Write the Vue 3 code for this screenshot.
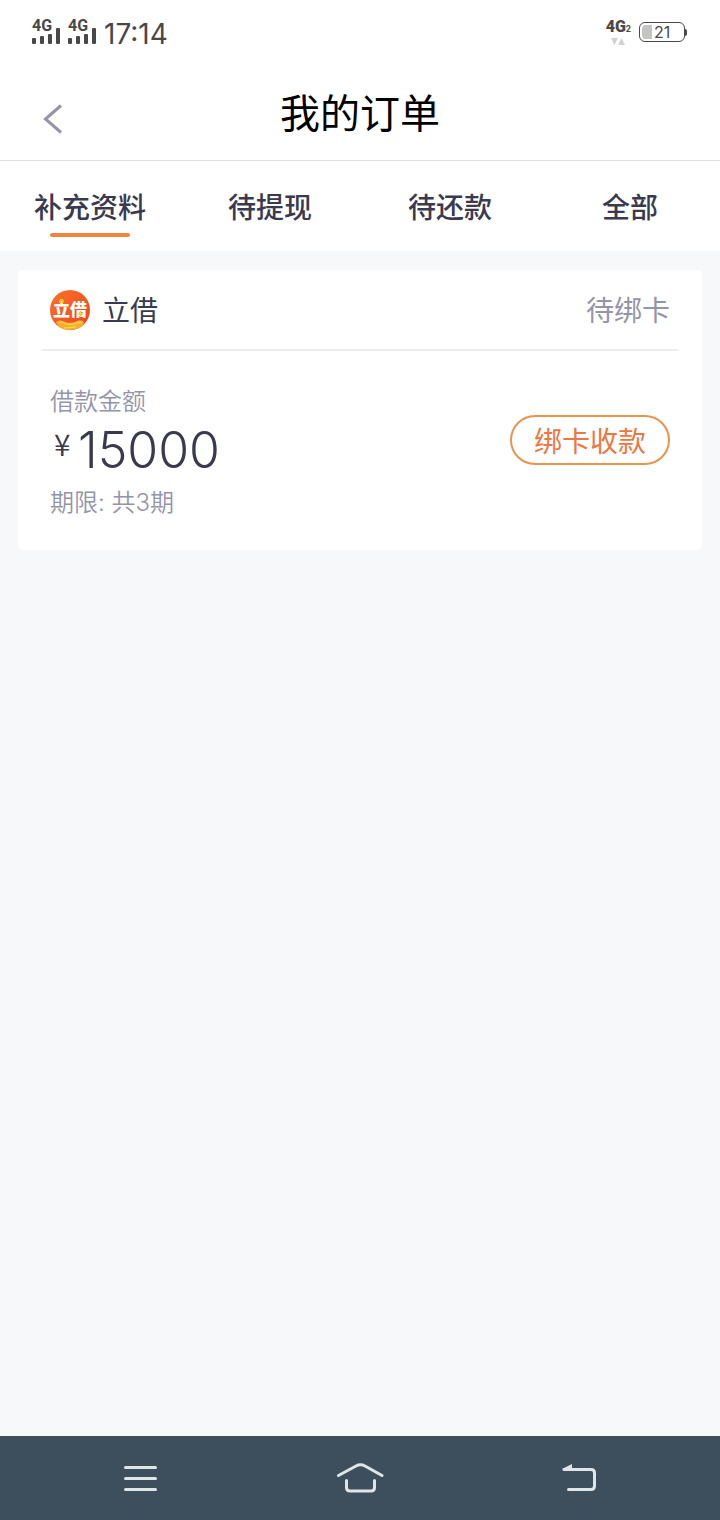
<script setup>
import { ref } from 'vue'

const tabs = ['补充资料', '待提现', '待还款', '全部']
const active = ref(0)
const signals = [1, 2]
</script>

<template>
  <div class="screen">
    <div class="status">
      <div class="status-side">
        <span v-for="s in signals" :key="s" class="signal">
          <b>4G</b>
          <svg width="28" height="16" viewBox="0 0 28 16" aria-hidden="true">
            <rect x="0" y="10" width="4" height="6" rx="1" />
            <rect x="8" y="8" width="4" height="8" rx="1" />
            <rect x="16" y="6" width="4" height="10" rx="1" />
            <rect x="24" y="0" width="4" height="16" rx="1" />
          </svg>
        </span>
        <time class="clock">17:14</time>
      </div>
      <div class="status-side">
        <span class="network">
          <span class="network-name"><b>4G</b><small>2</small></span>
          <svg width="14" height="7" viewBox="0 0 14 7" aria-hidden="true">
            <path d="M0 0h7L3.500 7zM7 7h7L10.500 0z" />
          </svg>
        </span>
        <span class="battery"><i></i><span>21</span></span>
      </div>
    </div>

    <header class="header">
      <button class="back" type="button" aria-label="返回">
        <svg width="20" height="30" viewBox="0 0 20 30">
          <path d="M18 1.500L2.500 15L18 28.500" />
        </svg>
      </button>
      <h1>我的订单</h1>
    </header>

    <nav class="tabs">
      <button
        v-for="(tab, i) in tabs"
        :key="tab"
        type="button"
        :class="{ active: active === i }"
        @click="active = i"
      >{{ tab }}</button>
    </nav>

    <main class="content">
      <article class="card">
        <div class="card-head">
          <svg class="logo" width="40" height="40" viewBox="0 0 40 40" aria-hidden="true">
            <defs>
              <linearGradient id="disc" x1="0" y1="0" x2="1" y2="1">
                <stop offset="0" stop-color="#fb7328" />
                <stop offset="1" stop-color="#ea4322" />
              </linearGradient>
              <clipPath id="round"><circle cx="20" cy="20" r="20" /></clipPath>
            </defs>
            <g clip-path="url(#round)">
              <rect width="40" height="40" fill="url(#disc)" />
              <path d="M6 32Q10 29.500 14 31.500Q20 34 26 31.500Q31 29 34 32L32 40H9z" fill="#f9ac28" />
              <path d="M9 33q3-1.500 6 .5t10 0q3-1.500 7-1M14 37.500q6 1 12-1" fill="none" stroke="#fdd04f" stroke-width="1.500" />
            </g>
            <text x="20" y="26" text-anchor="middle">立借</text>
            <circle cx="11.500" cy="11" r="1.500" fill="none" stroke="#ffc72d" stroke-width="1.500" />
            <path d="M31 21l-2 3h3l-3 3" fill="none" stroke="#ffc72d" stroke-width="1.500" />
          </svg>
          <h2>立借</h2>
          <span class="state">待绑卡</span>
        </div>
        <div class="card-body">
          <div class="loan">
            <p class="muted">借款金额</p>
            <p class="amount"><span>¥</span>15000</p>
            <p class="muted">期限: 共3期</p>
          </div>
          <button class="bind" type="button">绑卡收款</button>
        </div>
      </article>
    </main>

    <footer class="system-nav">
      <button type="button" aria-label="菜单">
        <svg width="48" height="40" viewBox="0 0 48 40">
          <path d="M9.500 9.500h30M9.500 20.500h30M9.500 31.500h30" />
        </svg>
      </button>
      <button type="button" aria-label="主页">
        <svg width="48" height="40" viewBox="0 0 48 40">
          <path d="M2.500 17.500L20 8q4.500-2.500 9 0l17 9.500M10.500 22.500v7q0 3.500 3.500 3.500h21q3.500 0 3.500-3.500v-7" />
        </svg>
      </button>
      <button type="button" aria-label="返回上一级">
        <svg width="48" height="40" viewBox="0 0 48 40">
          <path d="M8 11.500h27q3.500 0 3.500 3.500v13q0 3.500-3.500 3.500H12.500" />
          <path class="tip" d="M6 11L16 6v6z" />
        </svg>
      </button>
    </footer>
  </div>
</template>

<style>
body {
  background: #f6f8fa;
}
</style>

<style scoped>
.screen {
  min-height: 100vh;
  display: flex;
  flex-direction: column;
  background: #f6f8fa;
  color: #393a4e;
  font-family: Inter, "Noto Sans CJK SC", sans-serif;
}
button {
  border: 0;
  padding: 0;
  background: none;
  color: inherit;
  font: inherit;
  cursor: pointer;
}
h1, h2, p {
  margin: 0;
  font-weight: 400;
}
.status {
  height: 66px;
  padding: 0 32px;
  display: flex;
  justify-content: space-between;
  align-items: center;
  background: #fff;
  color: #484848;
}
.status svg {
  fill: currentColor;
}
.status-side {
  display: flex;
  align-items: center;
  gap: 8px;
}
.signal {
  height: 26px;
  padding-bottom: 4px;
  display: grid;
  align-items: end;
}
.signal > * {
  grid-area: 1 / 1;
}
.signal b {
  align-self: start;
  font: 700 16px/16px Roboto, sans-serif;
}
.clock {
  padding-top: 2px;
  font-size: 28px;
  line-height: 32px;
}
.network {
  display: flex;
  flex-direction: column;
  align-items: center;
  padding-bottom: 4px;
}
.network-name {
  display: flex;
  align-items: baseline;
  font: 700 16px/18px Roboto, sans-serif;
}
.network-name small {
  font-size: 9px;
}
.network svg {
  fill: #d2d2d2;
}
.battery {
  position: relative;
  width: 46px;
  height: 20px;
  box-sizing: border-box;
  border: 1px solid #484848;
  border-radius: 6px;
  margin: 0 3px 2px 0;
  padding: 2px;
  display: flex;
  align-items: center;
  font-size: 16px;
}
.battery i {
  width: 10px;
  height: 14px;
  margin-right: 2px;
  border-radius: 4px 0 0 4px;
  background: #c4c4c4;
}
.battery::after {
  content: "";
  position: absolute;
  right: -3px;
  top: 6px;
  width: 2px;
  height: 7px;
  border-radius: 0 2px 2px 0;
  background: #484848;
}
.header {
  height: 94px;
  display: grid;
  grid-template-columns: 120px 1fr 120px;
  align-items: center;
  background: #fff;
  border-bottom: 1px solid #dfdfe1;
}
.header h1 {
  padding-top: 2px;
  color: #000;
  font-size: 40px;
  line-height: 60px;
  text-align: center;
}
.back {
  justify-self: start;
  margin: 12px 0 0 43px;
  display: flex;
}
.back svg {
  fill: none;
  stroke: #9494aa;
  stroke-width: 3;
}
.tabs {
  height: 90px;
  display: grid;
  grid-template-columns: repeat(4, 1fr);
  background: #fff;
}
.tabs button {
  position: relative;
  padding-top: 25px;
  display: flex;
  justify-content: center;
  font-size: 28px;
  font-weight: 500;
  line-height: 44px;
}
.tabs .active::after {
  content: "";
  position: absolute;
  left: calc(50% - 40px);
  bottom: 14px;
  width: 80px;
  height: 4px;
  border-radius: 2px;
  background: #ed853f;
}
.content {
  flex: 1;
  padding: 19px 18px;
}
.card {
  padding: 0 24px 28px;
  border-radius: 4px;
  background: #fff;
}
.card-head {
  height: 79px;
  padding: 0 8px;
  display: flex;
  align-items: center;
  border-bottom: 2px solid #ececee;
}
.logo {
  margin-right: 12px;
}
.logo text {
  fill: #fff;
  font: 900 17px "Noto Sans CJK SC", sans-serif;
}
.card h2,
.state {
  padding-top: 2px;
  font-size: 28px;
  line-height: 40px;
}
.state {
  margin-left: auto;
  color: #9494a8;
}
.card-body {
  padding: 32px 8px 0;
  display: flex;
  justify-content: space-between;
  align-items: flex-start;
}
.muted {
  color: #9494a8;
  font-size: 24px;
  line-height: 38px;
  font-weight: 350;
}
.amount {
  padding-left: 4px;
  display: flex;
  align-items: flex-start;
  font-size: 50px;
  font-weight: 300;
  line-height: 58px;
  margin-bottom: 5px;
}
.amount span {
  width: 24px;
  font-family: "Noto Sans CJK SC", sans-serif;
  font-size: 30px;
  font-weight: 350;
  line-height: 44px;
}
.bind {
  width: 160px;
  height: 50px;
  margin-top: 32px;
  padding-top: 4px;
  border: 2px solid #e9934b;
  border-radius: 25px;
  color: #ed7740;
  font-size: 28px;
  line-height: 42px;
}
.system-nav {
  height: 84px;
  padding: 0 30px;
  display: grid;
  grid-template-columns: repeat(3, 1fr);
  background: #3d4f5d;
}
.system-nav button {
  display: flex;
  align-items: center;
  justify-content: center;
}
.system-nav svg {
  fill: none;
  stroke: #dfe6ea;
  stroke-width: 3;
  stroke-linecap: round;
}
.system-nav .tip {
  fill: #dfe6ea;
  stroke: none;
}
</style>
